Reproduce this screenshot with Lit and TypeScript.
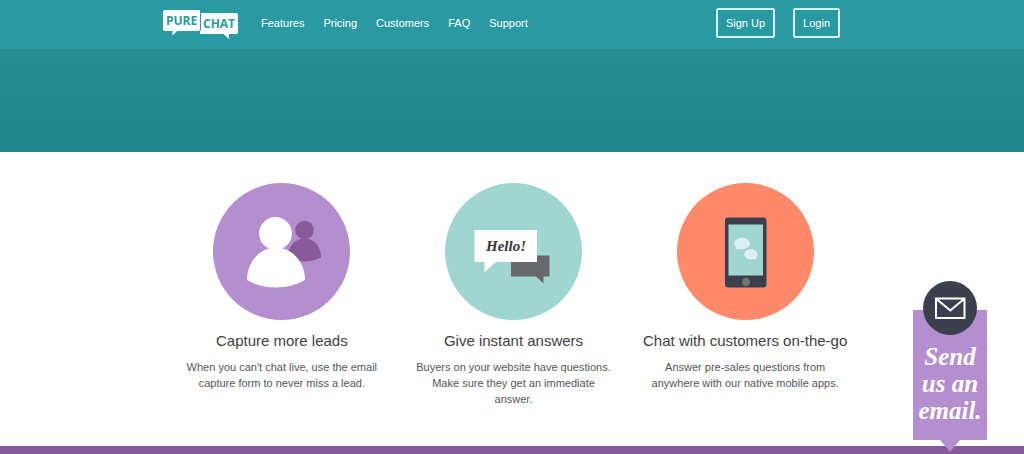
import { LitElement, html, css, svg, TemplateResult } from "lit";
import { customElement } from "lit/decorators.js";

interface Feature {
  title: string;
  text: string;
  art: TemplateResult;
}

const people = svg`
  <circle cx="68.5" cy="68.5" r="68.5" fill="#b48ece"/>
  <g fill="#875a99">
    <circle cx="91.5" cy="47" r="9.3"/>
    <path d="M91.5 55.5C101 55.5 108 63 108 74.5Q100 78.5 91.5 78.5Q83 78.5 75 74.5C75 63 82 55.5 91.5 55.5Z"/>
  </g>
  <path d="M62.500 64.500C79 64.500 92 79 92 97Q79 104.500 63 104.500Q47 104.500 34 97C34 79 47 64.500 62.500 64.500Z" fill="#fff"/>
  <circle cx="62.500" cy="50.500" r="16.400" fill="#fff"/>`;

const hello = svg`
  <circle cx="68.500" cy="68.500" r="68.500" fill="#9fd6d0"/>
  <path d="M66 72.500H104.500V93.500H98.500V100.500L91 93.500H66Z" fill="#67686c"/>
  <path d="M29.500 47H92V79H51L39.500 89V79H29.500Z" fill="#fff"/>
  <text class="hello" x="61" y="68" text-anchor="middle">Hello!</text>`;

const phone = svg`
  <circle cx="68.500" cy="68.500" r="68.500" fill="#fe896b"/>
  <rect x="48" y="34.500" width="41.500" height="70" rx="3" fill="#3c404c"/>
  <rect x="51.500" y="41.500" width="34.500" height="51" fill="#9fd6d0"/>
  <ellipse cx="65" cy="60.500" rx="8" ry="5.800" fill="#dcf0f2"/>
  <path d="M58.500 62L59 66.500L64 65Z" fill="#dcf0f2"/>
  <ellipse cx="73.800" cy="71.200" rx="6.700" ry="5.200" fill="#dcf0f2"/>
  <path d="M75 75L79 77L79.500 73Z" fill="#dcf0f2"/>
  <circle cx="69" cy="99" r="4.200" fill="#6c6d71"/>
  <rect x="67.300" y="97.300" width="3.400" height="3.400" rx="0.600" fill="none" stroke="#85868a" stroke-width="0.700"/>`;

@customElement("app-root")
export class AppRoot extends LitElement {
  static styles = css`
    :host {
      display: flex;
      flex-direction: column;
      min-height: 100vh;
      background: #fff;
      font-family: "Liberation Sans", Arial, sans-serif;
      font-size: 11px;
      line-height: 16px;
      color: #55565a;
    }
    .bar {
      background: #2a9aa2;
    }
    .inner {
      box-sizing: border-box;
      max-width: 700px;
      margin: 0 auto;
      display: flex;
      align-items: center;
      padding: 7px 22px 10px 0;
    }
    .logo,
    .logo svg,
    .art {
      display: block;
    }
    .mark {
      font: bold 12px "Open Sans", sans-serif;
      fill: #2a9aa2;
    }
    .links {
      display: flex;
      gap: 19px;
      margin-left: 21px;
      flex: 1;
    }
    .links a {
      color: #fff;
      text-decoration: none;
    }
    .actions {
      display: flex;
      gap: 18px;
    }
    .actions button {
      font: inherit;
      color: #fff;
      background: none;
      border: 2px solid #d4f2f4;
      border-radius: 2px;
      padding: 5px 8px;
      margin: 0;
      cursor: pointer;
    }
    .hero {
      height: 103px;
      background: linear-gradient(#258d93, #21868b);
    }
    .features {
      box-sizing: border-box;
      width: 100%;
      max-width: 698px;
      margin: 0 auto;
      padding: 31px 0 38px 3px;
      display: grid;
      grid-template-columns: repeat(3, minmax(0, 1fr));
      flex: 1;
    }
    .feature {
      display: flex;
      flex-direction: column;
      align-items: center;
      text-align: center;
      padding: 0 18px;
    }
    h2 {
      margin: 11px 0 8px;
      font-size: 15px;
      line-height: 20px;
      font-weight: normal;
      color: #3f4046;
      white-space: nowrap;
    }
    p {
      margin: 0;
    }
    .hello {
      font: italic bold 15px "Liberation Serif", serif;
      fill: #34353b;
    }
    .band {
      height: 8px;
      background: #875a99;
    }
    .mail {
      position: fixed;
      right: 37px;
      bottom: 2px;
      width: 74px;
      display: flex;
      flex-direction: column;
      align-items: center;
      color: #fff;
      text-decoration: none;
    }
    .badge {
      display: block;
      margin-bottom: -25px;
      z-index: 1;
    }
    .note {
      box-sizing: border-box;
      width: 100%;
      padding: 33px 0 16px;
      background: #b48ece;
      text-align: center;
      font: italic bold 25px/27px "Liberation Serif", serif;
    }
    .tip {
      display: block;
    }
  `;

  private links = ["Features", "Pricing", "Customers", "FAQ", "Support"];

  private features: Feature[] = [
    {
      title: "Capture more leads",
      text: "When you can't chat live, use the email capture form to never miss a lead.",
      art: people,
    },
    {
      title: "Give instant answers",
      text: "Buyers on your website have questions. Make sure they get an immediate answer.",
      art: hello,
    },
    {
      title: "Chat with customers on-the-go",
      text: "Answer pre-sales questions from anywhere with our native mobile apps.",
      art: phone,
    },
  ];

  render() {
    return html`
      <header class="bar">
        <div class="inner">
          <a class="logo" href="#" aria-label="Pure Chat">
            <svg width="78" height="32" viewBox="0 -1 78 32">
              <path d="M39 5H74Q76 5 76 7V24Q76 26 74 26H67V31L61.500 26H38Z" fill="#fff"/>
              <path d="M3 2H36.500Q38.500 2 38.500 4V21Q38.500 23 36.500 23H15L10.500 27.500V23H3Q1 23 1 21V4Q1 2 3 2Z" fill="#fff"/>
              <path d="M38.500 3V21.500Q38.500 23 36.500 23.500" fill="none" stroke="#2a9aa2"/>
              <text class="mark" x="4" y="17">PURE</text>
              <text class="mark" x="41" y="20">CHAT</text>
            </svg>
          </a>
          <nav class="links">
            ${this.links.map((l) => html`<a href="#">${l}</a>`)}
          </nav>
          <div class="actions">
            <button type="button">Sign Up</button>
            <button type="button">Login</button>
          </div>
        </div>
      </header>
      <div class="hero"></div>
      <main class="features">
        ${this.features.map(
          (f) => html`
            <section class="feature">
              <svg class="art" width="137" height="137" viewBox="0 0 137 137">${f.art}</svg>
              <h2>${f.title}</h2>
              <p>${f.text}</p>
            </section>
          `
        )}
      </main>
      <div class="band"></div>
      <a class="mail" href="#">
        <svg class="badge" width="54" height="54" viewBox="0 0 54 54">
          <circle cx="27" cy="27" r="27" fill="#3c404c"/>
          <path d="M13 17.500H41.500V37H13ZM13.500 18L27.300 29.500L41 18" fill="none" stroke="#fff" stroke-width="2"/>
        </svg>
        <span class="note">Send<br />us an<br />email.</span>
        <svg class="tip" width="20" height="12" viewBox="0 0 20 12">
          <path d="M0 0H20L10 12Z" fill="#b48ece"/>
        </svg>
      </a>
    `;
  }
}
